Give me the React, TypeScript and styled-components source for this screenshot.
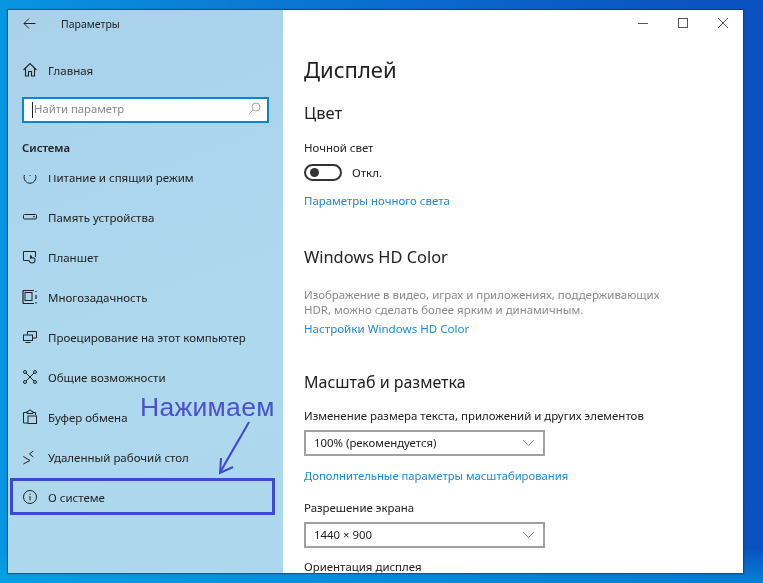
import React from 'react'
import styled, { createGlobalStyle } from 'styled-components'

const GlobalStyle = createGlobalStyle`
  html, body {
    margin: 0;
    padding: 0;
    width: 763px;
    height: 583px;
    overflow: hidden;
  }
  * {
    box-sizing: border-box;
  }
`

const Svg: React.FC<{ children: React.ReactNode; w?: number; h?: number }> = ({ children, w = 16, h = 16 }) => (
  <svg width={w} height={h} viewBox={`0 0 ${w} ${h}`} fill="none" stroke="#222" strokeWidth="1">
    {children}
  </svg>
)

const BackIcon = () => (
  <Svg w={13} h={12}>
    <path d="M6 .5 1 5.500l5 5M1 5.500h11.500" />
  </Svg>
)
const HomeIcon = () => (
  <Svg>
    <path d="M1.500 8 8 1.500 14.500 8M3.500 6.500V14h3V9.500h3V14h3V6.500" strokeWidth="1.100" />
  </Svg>
)
const PowerIcon = () => (
  <Svg>
    <path d="M4.800 3.200a6 6 0 1 0 6.400 0M8 1v6" />
  </Svg>
)
const StorageIcon = () => (
  <Svg>
    <rect x="1.500" y="5.500" width="13" height="4.500" rx="1" />
    <path d="M11 7.800h2" />
  </Svg>
)
const TabletIcon = () => (
  <Svg>
    <path d="M6.500 11.500h-5v-9h12V8" />
    <path d="M8.500 6.500v3.200M8.500 6.500c1 0 1 .5 1 2.500 2-.3 3.500 0 3.500 1.500 0 2-1 3.500-3 3.500-1.800 0-2.500-1-3.500-3" strokeWidth="1.100" />
  </Svg>
)
const MultitaskIcon = () => (
  <Svg>
    <rect x="3" y="3.500" width="7" height="8" />
    <path d="M1 1.500v13M1 1.500h11M1 14.500h11M14 2v1M14 6v4M14 13v1.500" strokeWidth="1.200" />
  </Svg>
)
const ProjectIcon = () => (
  <Svg>
    <path d="M5.500 5.500v-3h9v6.500H11" />
    <rect x="1.500" y="6" width="9" height="5.500" />
    <path d="M3.500 13.500h5" />
  </Svg>
)
const AccessIcon = () => (
  <Svg>
    <path d="M4 4l8 8M12 4l-8 8" />
    <circle cx="3" cy="3" r="1.500" />
    <circle cx="13" cy="3" r="1.500" />
    <circle cx="3" cy="13" r="1.500" />
    <circle cx="13" cy="13" r="1.500" />
  </Svg>
)
const ClipboardIcon = () => (
  <Svg>
    <path d="M5.500 14H1.500V3.500H5M11 3.500h2.500V6" />
    <path d="M5 4.500V2.500h1.500a1.500 1.500 0 0 1 3 0H11v2z" />
    <rect x="6" y="7" width="8.500" height="7.500" />
  </Svg>
)
const RemoteIcon = () => (
  <Svg>
    <path d="M1.300 7.500 8 11.500l-6.700 3.500" />
    <path d="M11.300 2 7.500 5l3.800 3" />
  </Svg>
)
const InfoIcon = () => (
  <Svg>
    <circle cx="8" cy="8" r="6.500" />
    <path d="M8 7v4.500M8 4.500v1.200" />
  </Svg>
)
const SearchIcon = () => (
  <svg width="13" height="13" viewBox="0 0 13 13" fill="none" stroke="#a8a8a8" strokeWidth="1">
    <circle cx="8" cy="5" r="4" />
    <path d="M5 8 1 12" />
  </svg>
)
const Chevron = styled.svg`
  margin-top: 2px;
`
const ChevronIcon = () => (
  <Chevron width="13" height="8" viewBox="0 0 13 8" fill="none" stroke="#888" strokeWidth="1">
    <path d="M1 1l5.500 5.500L12 1" />
  </Chevron>
)

const Desktop = styled.div`
  width: 763px;
  height: 583px;
  padding: 10px 20px 10px 8px;
  background:
    linear-gradient(0deg, rgba(0, 170, 230, 0.55) 0%, rgba(0, 170, 230, 0) 6%),
    linear-gradient(90deg, #0895e2 0%, #0a78d4 35%, #0a5cc6 75%, #0a50c0 100%);
  position: relative;
  overflow: hidden;
  font-family: 'Noto Sans', 'Open Sans', sans-serif;
  color: #222;
  filter: blur(0.35px);
`

const Window = styled.div`
  display: flex;
  width: 735px;
  height: 563px;
  background: #fff;
  box-shadow: 0 0 1px 1px rgba(30, 50, 80, 0.55);
  overflow: hidden;
`

const Sidebar = styled.aside`
  width: 275px;
  flex: none;
  display: flex;
  flex-direction: column;
  background: linear-gradient(160deg, #a9d2ea 0%, #add8ee 55%, #acd7ec 100%);
`

const TitleBar = styled.div`
  height: 31px;
  display: flex;
  align-items: center;
  padding: 0 0 4px 15px;
  gap: 25px;
  font-size: 10.500px;
`

const HomeRow = styled.div`
  height: 40px;
  margin-top: 9px;
  display: flex;
  align-items: center;
  gap: 10px;
  padding-left: 14px;
  font-size: 11.500px;
`

const SearchBox = styled.div`
  margin: 7px 14px 0 14px;
  height: 26px;
  background: #fff;
  border: 2px solid #0a84d8;
  display: flex;
  align-items: center;
  justify-content: space-between;
  padding: 0 6px 3px 10px;
  font-size: 11.300px;
  color: #8a8a8a;
  position: relative;
  &::before {
    content: '';
    position: absolute;
    left: 8px;
    top: 3px;
    bottom: 3px;
    width: 1px;
    background: #222;
  }
`

const GroupTitle = styled.div`
  margin: 17px 0 0 14px;
  height: 16px;
  line-height: 16px;
  font-size: 11.300px;
  font-weight: 600;
`

const NavList = styled.div`
  flex: 1;
  margin-top: 19px;
  overflow: hidden;
`

const NavRow = styled.div<{ $clipped?: boolean }>`
  height: 40px;
  margin-top: ${(p) => (p.$clipped ? '-17px' : '0')};
  padding: 0 0 2px 14px;
  display: flex;
  align-items: center;
  gap: 10px;
  font-size: 11.500px;
  white-space: nowrap;
  svg {
    flex: none;
  }
`

const Content = styled.main`
  flex: 1;
  min-width: 0;
  position: relative;
  padding: 0 21px;
  overflow: hidden;
`

const WindowButtons = styled.div`
  position: absolute;
  top: 6px;
  right: 0;
  display: flex;
`

const WinButton = styled.div`
  width: 40px;
  height: 14px;
  display: flex;
  align-items: center;
  justify-content: center;
`

const PageTitle = styled.h1`
  margin: 43px 0 0;
  font-size: 22px;
  line-height: 32px;
  font-weight: 400;
`

const SectionTitle = styled.h2<{ $top: number; $size?: number }>`
  margin: ${(p) => p.$top}px 0 0;
  font-size: ${(p) => p.$size ?? 16}px;
  line-height: 22px;
  font-weight: 400;
`

const Label = styled.div<{ $top: number }>`
  margin-top: ${(p) => p.$top}px;
  font-size: 11.450px;
  line-height: 16px;
  white-space: nowrap;
`

const ToggleRow = styled.div`
  margin-top: 7px;
  display: flex;
  align-items: center;
  gap: 10px;
  font-size: 11.500px;
  height: 18px;
`

const Toggle = styled.div`
  width: 38px;
  height: 17px;
  border: 2px solid #333;
  border-radius: 9px;
  display: flex;
  align-items: center;
  padding-left: 4px;
  &::before {
    content: '';
    width: 9px;
    height: 9px;
    border-radius: 50%;
    background: #333;
  }
`

const Link = styled.div<{ $top: number; $size?: number }>`
  margin-top: ${(p) => p.$top}px;
  color: #1a8ae0;
  font-size: ${(p) => p.$size ?? 11.450}px;
  line-height: 16px;
  white-space: nowrap;
`

const Muted = styled.div`
  margin-top: 19px;
  color: #8a8a8a;
  font-size: 11.450px;
  line-height: 15px;
  white-space: nowrap;
`

const Select = styled.div`
  margin-top: 6px;
  width: 241px;
  height: 26px;
  border: 2px solid #a0a0a0;
  display: flex;
  align-items: center;
  justify-content: space-between;
  padding: 0 8px 2px;
  font-size: 11.400px;
`

const Annotation = styled.div`
  position: absolute;
  left: 140px;
  top: 391px;
  color: #4a50d0;
  font-size: 26.500px;
  line-height: 32px;
  font-family: 'Liberation Sans', sans-serif;
  letter-spacing: 0.300px;
`

const Marker = styled.div`
  position: absolute;
  left: 10px;
  top: 478px;
  width: 265px;
  height: 37px;
  border: 3px solid #4048d0;
`

const Arrow = styled.svg`
  position: absolute;
  left: 216px;
  top: 420px;
`

const navItems: { label: string; icon: React.ReactNode }[] = [
  { label: 'Питание и спящий режим', icon: <PowerIcon /> },
  { label: 'Память устройства', icon: <StorageIcon /> },
  { label: 'Планшет', icon: <TabletIcon /> },
  { label: 'Многозадачность', icon: <MultitaskIcon /> },
  { label: 'Проецирование на этот компьютер', icon: <ProjectIcon /> },
  { label: 'Общие возможности', icon: <AccessIcon /> },
  { label: 'Буфер обмена', icon: <ClipboardIcon /> },
  { label: 'Удаленный рабочий стол', icon: <RemoteIcon /> },
  { label: 'О системе', icon: <InfoIcon /> },
]

export default function App() {
  return (
    <Desktop>
      <GlobalStyle />
      <Window>
        <Sidebar>
          <TitleBar>
            <BackIcon />
            <span>Параметры</span>
          </TitleBar>
          <HomeRow>
            <HomeIcon />
            Главная
          </HomeRow>
          <SearchBox>
            Найти параметр
            <SearchIcon />
          </SearchBox>
          <GroupTitle>Система</GroupTitle>
          <NavList>
            {navItems.map((item, i) => (
              <NavRow key={item.label} $clipped={i === 0}>
                {item.icon}
                {item.label}
              </NavRow>
            ))}
          </NavList>
        </Sidebar>
        <Content>
          <WindowButtons>
            <WinButton>
              <svg width="10" height="10" viewBox="0 0 10 10" stroke="#555" fill="none">
                <path d="M0 5.500h10" />
              </svg>
            </WinButton>
            <WinButton>
              <svg width="10" height="10" viewBox="0 0 10 10" stroke="#555" fill="none">
                <rect x="0.500" y="0.500" width="9" height="9" />
              </svg>
            </WinButton>
            <WinButton>
              <svg width="10" height="10" viewBox="0 0 10 10" stroke="#555" fill="none">
                <path d="M0 0l10 10M10 0 0 10" />
              </svg>
            </WinButton>
          </WindowButtons>
          <PageTitle>Дисплей</PageTitle>
          <SectionTitle $top={17} $size={16.500}>Цвет</SectionTitle>
          <Label $top={16}>Ночной свет</Label>
          <ToggleRow>
            <Toggle />
            Откл.
          </ToggleRow>
          <Link $top={12}>Параметры ночного света</Link>
          <SectionTitle $top={37} $size={16.400}>Windows HD Color</SectionTitle>
          <Muted>
            Изображение в видео, играх и приложениях, поддерживающих
            <br />
            HDR, можно сделать более ярким и динамичным.
          </Muted>
          <Link $top={4} $size={11.600}>Настройки Windows HD Color</Link>
          <SectionTitle $top={34}>Масштаб и разметка</SectionTitle>
          <Label $top={15}>Изменение размера текста, приложений и других элементов</Label>
          <Select>
            100% (рекомендуется)
            <ChevronIcon />
          </Select>
          <Link $top={12} $size={11.250}>Дополнительные параметры масштабирования</Link>
          <Label $top={16}>Разрешение экрана</Label>
          <Select>
            1440 × 900
            <ChevronIcon />
          </Select>
          <Label $top={11}>Ориентация дисплея</Label>
        </Content>
      </Window>
      <Annotation>Нажимаем</Annotation>
      <Marker />
      <Arrow width="34" height="56" viewBox="0 0 34 56" fill="none" stroke="#4048d0" strokeWidth="2">
        <path d="M33 2C26 15 14 34 4 53M5 38 4 53l13-6" />
      </Arrow>
    </Desktop>
  )
}
